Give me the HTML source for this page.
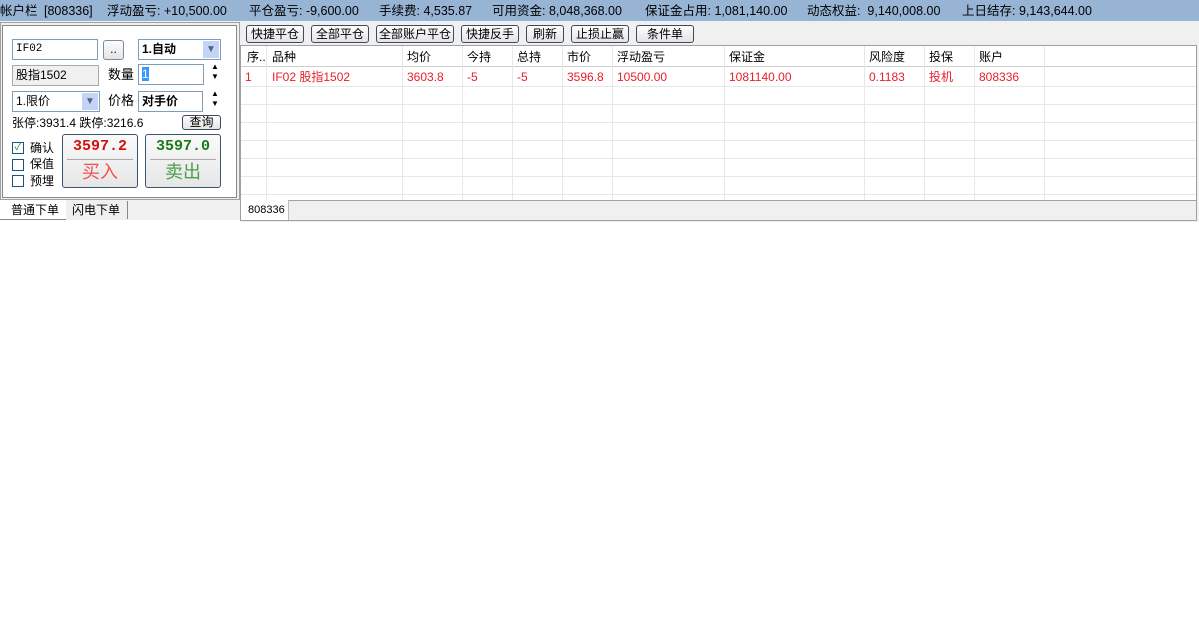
<!DOCTYPE html>
<html><head><meta charset="utf-8"><style>
*{margin:0;padding:0;box-sizing:border-box}
body{width:1199px;height:630px;background:#fff;font-family:"Liberation Sans","Noto Sans CJK SC",sans-serif;font-size:12px;line-height:15px;color:#000;position:relative;overflow:hidden}
.a{position:absolute;white-space:nowrap}
.top{left:0;top:0;width:1199px;height:22px;background:#98b4d4;border-bottom:1px solid #f0f0f0}
.t{position:absolute;top:4px;white-space:nowrap;font-size:12.5px;line-height:15px}
.btn{position:absolute;height:18px;border:1px solid #3c4a5e;border-radius:3px;background:linear-gradient(#fdfdfd,#e4e4e4);text-align:center;line-height:16px;font-size:12px}
.inp{position:absolute;height:21px;border:1px solid #7f9db9;background:#fff;line-height:19px;padding-left:3px}
.cb{position:absolute;width:12px;height:12px;border:1px solid #1c5180;background:#fff}
.vl{position:absolute;width:1px;background:#e8e8e8}
.hl{position:absolute;height:1px;background:#e8e8e8}
.r{color:#e8202a}
</style></head><body>
<div class="a top"></div>
<div class="t" style="left:0">帐户栏</div>
<div class="t" style="left:44px">[808336]</div>
<div class="t" style="left:107px">浮动盈亏: +10,500.00</div>
<div class="t" style="left:249px">平仓盈亏: -9,600.00</div>
<div class="t" style="left:379px">手续费: 4,535.87</div>
<div class="t" style="left:492px">可用资金: 8,048,368.00</div>
<div class="t" style="left:645px">保证金占用: 1,081,140.00</div>
<div class="t" style="left:807px">动态权益:&nbsp; 9,140,008.00</div>
<div class="t" style="left:962px">上日结存: 9,143,644.00</div>

<!-- left panel -->
<div class="a" style="left:0;top:22px;width:240px;height:178px;background:#f0f0f0;border:1px solid #a0a0a0"></div>
<div class="a" style="left:2px;top:25px;width:235px;height:173px;background:#fff;border:1px solid #888"></div>
<div class="inp" style="left:12px;top:39px;width:86px;font-family:'Liberation Mono',monospace;font-size:11px">IF02</div>
<div class="btn" style="left:103px;top:40px;width:21px;height:20px;border-color:#7a8aa0">..</div>
<div class="inp" style="left:138px;top:39px;width:83px;font-weight:bold">1.自动<span style="position:absolute;right:1px;top:1px;width:16px;height:17px;background:#c4d4f4;color:#4d6185;font-size:10px;text-align:center;line-height:17px">▼</span></div>
<div class="inp" style="left:12px;top:65px;width:87px;background:#f0f0f0;border-color:#aaa">股指1502</div>
<div class="a" style="left:108px;top:67px;font-size:13px;line-height:16px">数量</div>
<div class="inp" style="left:138px;top:64px;width:66px"><span style="background:#3399ff;color:#fff">1</span></div>
<div class="a" style="left:211px;top:62px;font-size:8px;line-height:10px">▲<br>▼</div>
<div class="inp" style="left:12px;top:91px;width:88px">1.限价<span style="position:absolute;right:1px;top:1px;width:16px;height:17px;background:#c4d4f4;color:#4d6185;font-size:10px;text-align:center;line-height:17px">▼</span></div>
<div class="a" style="left:108px;top:93px;font-size:13px;line-height:16px">价格</div>
<div class="inp" style="left:138px;top:91px;width:65px;font-weight:bold">对手价</div>
<div class="a" style="left:211px;top:89px;font-size:8px;line-height:10px">▲<br>▼</div>
<div class="a" style="left:12px;top:116px;font-size:12px">张停:3931.4 跌停:3216.6</div>
<div class="btn" style="left:182px;top:115px;width:39px;height:15px;line-height:13px">查询</div>
<div class="cb" style="left:12px;top:142px;font-size:10px;line-height:10px;color:#2a8a2a;text-align:center">✓</div>
<div class="a" style="left:30px;top:141px">确认</div>
<div class="cb" style="left:12px;top:159px"></div>
<div class="a" style="left:30px;top:157px">保值</div>
<div class="cb" style="left:12px;top:175px"></div>
<div class="a" style="left:30px;top:174px">预埋</div>
<div class="a" style="left:62px;top:134px;width:76px;height:54px;border:1px solid #3c5470;border-radius:3px;background:linear-gradient(#fafafa,#e6e6e6)">
<div style="text-align:center;color:#d01010;font-weight:bold;font-size:15px;line-height:18px;font-family:'Liberation Mono',monospace;margin-top:3px">3597.2</div>
<div style="margin:3px 4px 0;border-top:1px solid #aaa"></div>
<div style="text-align:center;color:#f05050;font-size:18px;line-height:24px">买入</div></div>
<div class="a" style="left:145px;top:134px;width:76px;height:54px;border:1px solid #3c5470;border-radius:3px;background:linear-gradient(#fafafa,#e6e6e6)">
<div style="text-align:center;color:#1a7a1a;font-weight:bold;font-size:15px;line-height:18px;font-family:'Liberation Mono',monospace;margin-top:3px">3597.0</div>
<div style="margin:3px 4px 0;border-top:1px solid #aaa"></div>
<div style="text-align:center;color:#4aa04a;font-size:18px;line-height:24px">卖出</div></div>
<div class="a" style="left:0;top:200px;width:240px;height:20px;background:#f0f0f0"></div>
<div class="a" style="left:0;top:200px;width:66px;height:20px;background:#fff;border-bottom:1px solid #888;line-height:20px;padding-left:11px">普通下单</div>
<div class="a" style="left:66px;top:201px;width:62px;height:18px;border-right:1px solid #888;line-height:18px;padding-left:6px">闪电下单</div>

<!-- right -->
<div class="a" style="left:240px;top:22px;width:959px;height:200px;background:#f0f0f0"></div>
<div class="btn" style="left:246px;top:25px;width:58px">快捷平仓</div>
<div class="btn" style="left:311px;top:25px;width:58px">全部平仓</div>
<div class="btn" style="left:376px;top:25px;width:78px">全部账户平仓</div>
<div class="btn" style="left:461px;top:25px;width:58px">快捷反手</div>
<div class="btn" style="left:526px;top:25px;width:38px">刷新</div>
<div class="btn" style="left:571px;top:25px;width:58px">止损止赢</div>
<div class="btn" style="left:636px;top:25px;width:58px">条件单</div>
<div class="a" style="left:240px;top:45px;width:957px;height:155px;background:#fff;border:1px solid #a0a0a0;border-bottom:none"></div>
<div class="a" style="left:241px;top:46px;width:955px;height:21px;background:#fff;border-bottom:1px solid #d0d0d0"></div>
<div class="hl" style="left:241px;top:86px;width:955px"></div>
<div class="hl" style="left:241px;top:104px;width:955px"></div>
<div class="hl" style="left:241px;top:122px;width:955px"></div>
<div class="hl" style="left:241px;top:140px;width:955px"></div>
<div class="hl" style="left:241px;top:158px;width:955px"></div>
<div class="hl" style="left:241px;top:176px;width:955px"></div>
<div class="hl" style="left:241px;top:194px;width:955px"></div>
<div class="vl" style="left:266px;top:46px;height:154px"></div>
<div class="vl" style="left:402px;top:46px;height:154px"></div>
<div class="vl" style="left:462px;top:46px;height:154px"></div>
<div class="vl" style="left:512px;top:46px;height:154px"></div>
<div class="vl" style="left:562px;top:46px;height:154px"></div>
<div class="vl" style="left:612px;top:46px;height:154px"></div>
<div class="vl" style="left:724px;top:46px;height:154px"></div>
<div class="vl" style="left:864px;top:46px;height:154px"></div>
<div class="vl" style="left:924px;top:46px;height:154px"></div>
<div class="vl" style="left:974px;top:46px;height:154px"></div>
<div class="vl" style="left:1044px;top:46px;height:154px"></div>
<div class="a" style="left:247px;top:50px">序..</div>
<div class="a" style="left:272px;top:50px">品种</div>
<div class="a" style="left:407px;top:50px">均价</div>
<div class="a" style="left:467px;top:50px">今持</div>
<div class="a" style="left:517px;top:50px">总持</div>
<div class="a" style="left:567px;top:50px">市价</div>
<div class="a" style="left:617px;top:50px">浮动盈亏</div>
<div class="a" style="left:729px;top:50px">保证金</div>
<div class="a" style="left:869px;top:50px">风险度</div>
<div class="a" style="left:929px;top:50px">投保</div>
<div class="a" style="left:979px;top:50px">账户</div>
<div class="a r" style="left:245px;top:70px">1</div>
<div class="a r" style="left:272px;top:70px">IF02 股指1502</div>
<div class="a r" style="left:407px;top:70px">3603.8</div>
<div class="a r" style="left:467px;top:70px">-5</div>
<div class="a r" style="left:517px;top:70px">-5</div>
<div class="a r" style="left:567px;top:70px">3596.8</div>
<div class="a r" style="left:617px;top:70px">10500.00</div>
<div class="a r" style="left:729px;top:70px">1081140.00</div>
<div class="a r" style="left:869px;top:70px">0.1183</div>
<div class="a r" style="left:929px;top:70px">投机</div>
<div class="a r" style="left:979px;top:70px">808336</div>
<div class="a" style="left:240px;top:200px;width:957px;height:21px;border:1px solid #a0a0a0;background:#f0f0f0"></div>
<div class="a" style="left:241px;top:200px;width:48px;height:20px;background:#fff;border-right:1px solid #bbb;line-height:20px;padding-left:7px;font-size:11px">808336</div>
</body></html>
